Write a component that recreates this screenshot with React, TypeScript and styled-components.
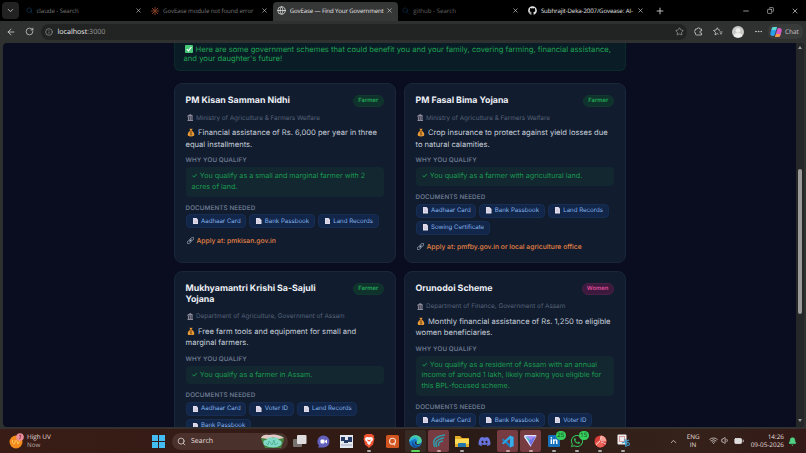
import React from 'react'
import styled, { createGlobalStyle, css } from 'styled-components'
import {
  ArrowLeft,
  BatteryFull,
  Bell,
  ChevronDown,
  ChevronUp,
  Copy,
  Ellipsis,
  Globe,
  Info,
  Minus,
  Plus,
  RotateCw,
  Search,
  Star,
  Volume1,
  Wifi,
  X,
} from 'lucide-react'
import { FaDiscord, FaGithub, FaLinkedinIn, FaWhatsapp } from 'react-icons/fa6'

const GlobalStyle = createGlobalStyle`
  * {
    box-sizing: border-box;
  }

  body {
    margin: 0;
    overflow: hidden;
    background: #000;
  }

  svg {
    display: block;
    flex-shrink: 0;
  }
`

const Screen = styled.div`
  display: flex;
  flex-direction: column;
  width: 806px;
  height: 453px;
  overflow: hidden;
  background: #2f3030;
  font-family: 'Open Sans', 'Noto Sans', sans-serif;
  text-rendering: geometricPrecision;
  white-space: nowrap;
`

/* browser chrome */

const TabStrip = styled.div`
  display: flex;
  align-items: center;
  height: 21px;
  padding-left: 2px;
  background: #000;
  color: #ddd;
`

const TabMenu = styled.div`
  display: grid;
  place-items: center;
  width: 17px;
  height: 17px;
  margin-right: 2.5px;
  border-radius: 4px;
  background: #222;
`

const Tab = styled.div<{ $active?: boolean; $color?: string }>`
  display: flex;
  align-items: center;
  width: 125.6px;
  height: 19px;
  margin-top: 2px;
  padding: 0 5px 2px 4px;
  border-radius: 4px 4px 0 0;
  font-size: 6.1px;
  color: ${p => p.$color || '#777'};
  ${p =>
    p.$active &&
    css`
      background: #353636;
    `}
`

const TabTitle = styled.span<{ $spacing?: number }>`
  flex: 1;
  width: 0;
  margin: 0 1px 0 4px;
  letter-spacing: ${p => p.$spacing || 0}px;
`

const NewTab = styled.div`
  margin-left: 6px;
`

const WindowButtons = styled.div`
  display: flex;
  gap: 17px;
  margin-left: auto;
  padding-right: 7px;
`

const Toolbar = styled.div`
  display: flex;
  align-items: center;
  height: 21.5px;
  padding: 0 3px 0 6px;
  background: #2f3030;
  color: #d0d0d0;
`

const Address = styled.div`
  display: flex;
  align-items: center;
  width: 646px;
  height: 16px;
  margin-left: 7px;
  padding: 0 3px 0 4px;
  border-radius: 8px;
  background: #222323;
  color: #9b9b9b;
  font-size: 7.1px;

  b {
    color: #eee;
    font-weight: 500;
  }

  span {
    flex: 1;
    margin-left: 4.5px;
  }
`

const ToolbarActions = styled.div`
  display: flex;
  align-items: center;
  justify-content: space-between;
  width: 69px;
  margin-left: 7px;
`

const ChatButton = styled.div`
  display: flex;
  align-items: center;
  gap: 3px;
  width: 35px;
  height: 15px;
  margin-left: auto;
  padding-left: 2px;
  border-radius: 6px;
  background: #393a3a;
  font-size: 6.4px;
`

/* page */

const Viewport = styled.main`
  display: flex;
  height: 384px;
  margin: 0 2px 0 3px;
  border-radius: 4px;
  overflow: hidden;
  background: #090d1f;
  font-family: Inter, sans-serif;
`

const Content = styled.div`
  flex: 1;
  padding-left: 170.5px;
  overflow: hidden;
`

const Scrollbar = styled.div`
  display: flex;
  flex-direction: column;
  align-items: center;
  width: 8px;
  padding-top: 3px;
  background: #252627;
`

const Arrow = styled.div<{ $down?: boolean }>`
  width: 0;
  border: 2px solid transparent;
  border-top-width: ${p => (p.$down ? 3 : 0)}px;
  border-bottom-width: ${p => (p.$down ? 0 : 3)}px;
  border-top-color: #999;
  border-bottom-color: #999;
`

const Thumb = styled.div`
  width: 4px;
  height: 145px;
  margin: 120px 0 105px;
  border-radius: 2px;
  background: #9a9a9a;
`

const Banner = styled.div`
  width: 452px;
  height: 28px;
  padding: 2px 9px;
  border: 1px solid #0b2b2b;
  border-top: 0;
  border-radius: 0 0 6px 6px;
  background: #0a1c25;
  color: #1fa354;
  font-size: 7.67px;
  line-height: 9.6px;
`

const Cards = styled.div`
  display: grid;
  grid-template-columns: 222px 222px;
  gap: 8.3px 8px;
  width: 452px;
  margin-top: 12px;
`

const Card = styled.article`
  height: 180px;
  padding: 11.2px 11px 0;
  border: 1px solid #1a2639;
  border-radius: 8px;
  background: #111c2e;
`

const CardHead = styled.div`
  display: flex;
  align-items: flex-start;
  justify-content: space-between;
`

const Title = styled.h2`
  margin: 0;
  color: #eceff5;
  font-size: 8.8px;
  font-weight: 700;
  line-height: 11px;
`

const Badge = styled.span<{ $pink?: boolean }>`
  padding: 0 4.3px;
  border: 1px solid ${p => (p.$pink ? '#482147' : '#11372f')};
  border-radius: 6px;
  background: ${p => (p.$pink ? '#3d1a3d' : '#10322c')};
  color: ${p => (p.$pink ? '#df4b99' : '#22a658')};
  font-size: 5.8px;
  font-weight: 600;
  line-height: 10px;
`

const Ministry = styled.div`
  display: flex;
  align-items: center;
  gap: 3px;
  height: 10px;
  margin-top: 6.3px;
  padding-left: 1px;
  color: #566379;
  font-size: 6.35px;
`

const Benefit = styled.p`
  margin: 4.5px 0 0;
  color: #c5cdd9;
  font-size: 7.6px;
  line-height: 11.4px;
`

const Label = styled.div`
  height: 8px;
  margin-top: 6px;
  color: #69778d;
  font-size: 6.3px;
  font-weight: 600;
  line-height: 8px;
  letter-spacing: 0.1px;
`

const Reason = styled.div`
  margin: 3px 0 7px;
  padding: 4px 6px;
  border-radius: 4px;
  background: #12272f;
  color: #1c9a51;
  font-size: 7.15px;
  line-height: 10.7px;

  & + ${Label} {
    margin-top: 0;
  }
`

const Chips = styled.div`
  display: flex;
  flex-wrap: wrap;
  gap: 3px 3px;
  margin-top: 2.5px;
`

const Chip = styled.span`
  display: flex;
  align-items: center;
  gap: 3px;
  height: 14px;
  padding: 0 4.6px 0 6px;
  border: 1px solid #172d51;
  border-radius: 4px;
  background: #12264a;
  color: #83b3ea;
  font-size: 6.12px;
`

const Apply = styled.div`
  display: flex;
  align-items: center;
  gap: 3px;
  height: 10px;
  margin-top: 7.3px;
  padding-left: 1px;
  color: #e48245;
  font-size: 6.75px;
  font-weight: 500;
`

const Inline = styled.span<{ $gap: number }>`
  display: inline-block;
  margin: 0 ${p => p.$gap}px 0 1px;
  line-height: 0;
  vertical-align: -1.5px;
`

/* taskbar */

const Taskbar = styled.footer`
  display: flex;
  align-items: center;
  height: 25px;
  margin-top: auto;
  border-top: 1px solid #38302f;
  background: linear-gradient(90deg, #391c16, #321b15 45%, #2b1b17 58%, #35221a 85%, #331917);
  color: #e6dfdd;
  font-size: 6.4px;
`

const Weather = styled.div`
  display: flex;
  align-items: center;
  gap: 3px;
  width: 152px;
  padding-left: 9px;
  line-height: 8.5px;

  small {
    display: block;
    color: #bcaca7;
    font-size: 6.2px;
  }
`

const SearchBox = styled.div`
  display: flex;
  align-items: center;
  gap: 5px;
  width: 115.5px;
  height: 17px;
  margin: 0 1px 0 7px;
  padding: 0 3px 0 5px;
  border-radius: 9px;
  background: #4b312c;
  font-size: 7px;

  span {
    flex: 1;
  }
`

const Apps = styled.div`
  display: flex;
`

const AppSlot = styled.div<{ $bg?: string; $running?: string }>`
  position: relative;
  display: grid;
  place-items: center;
  width: 21px;
  height: 22px;
  margin: 0 1.05px;
  border-radius: 2px;
  background: ${p => p.$bg || 'transparent'};

  &::after {
    content: '';
    position: absolute;
    bottom: 0.5px;
    width: ${p => (p.$running === '#5bd45c' ? 9 : 4)}px;
    height: 1.5px;
    border-radius: 1px;
    background: ${p => p.$running || 'transparent'};
  }
`

const Count = styled.span`
  position: absolute;
  top: 1px;
  right: -1px;
  padding: 0 1.5px;
  border-radius: 5px;
  background: #36cf5c;
  color: #10331a;
  font-size: 6px;
  line-height: 8.5px;
`

const Tray = styled.div`
  display: flex;
  align-items: center;
  margin-left: auto;
  padding-right: 9px;
`

const TwoLines = styled.div<{ $right?: boolean }>`
  text-align: ${p => (p.$right ? 'right' : 'center')};
  font-size: 6.4px;
  line-height: 8.5px;
`

const TrayIcons = styled.div`
  display: flex;
  gap: 3.5px;
  margin: 0 7px 0 9px;
`

const CheckIcon = () => (
  <svg width="8" height="8" viewBox="0 0 8 8">
    <rect width="8" height="8" rx="1" fill="#46c877" />
    <path d="M1.8 4.2l1.6 1.6 3-3.7" fill="none" stroke="#fff" strokeWidth="1.2" />
  </svg>
)

const BankIcon = () => (
  <svg width="6.5" height="7" viewBox="0 0 13 14">
    <path d="M6.5 0L13 4v1H0V4zM1 12h11v2H1z" fill="#8d8a99" />
    <path d="M3 5v7M6.5 5v7M10 5v7" stroke="#858292" strokeWidth="2.4" />
  </svg>
)

const MoneyIcon = () => (
  <svg width="8" height="8.5" viewBox="0 0 16 18">
    <path d="M5 1l3 1 3-1-1 5c4 3 5 6 5 8 0 3-2 4-7 4s-7-1-7-4c0-2 1-5 5-8z" fill="#e79a35" />
    <path d="M5.5 6h5" stroke="#7a4520" strokeWidth="1.5" />
    <path d="M10 9c-5-1-5 2-2 3s2 3-2 2M8 8v8" stroke="#764414" fill="none" strokeWidth="1.3" />
  </svg>
)

const PageIcon = () => (
  <svg width="5.5" height="6.5" viewBox="0 0 11 13">
    <path d="M0 0h7l4 4v9H0z" fill="#e1dded" />
    <path d="M2 4h4M2 6.5h7M2 9h7" stroke="#b5b4ca" strokeWidth=".8" />
  </svg>
)

const LinkIcon = () => (
  <svg width="7" height="7" viewBox="0 0 14 14" fill="none" stroke="#a7afbf" strokeWidth="1.8">
    <rect x="6" y="1.5" width="8" height="5" rx="2.5" transform="rotate(-45 10 4)" />
    <rect x="0" y="7.5" width="8" height="5" rx="2.5" transform="rotate(-45 4 10)" />
    <path d="M5 9l4-4" />
  </svg>
)

const ExtensionsIcon = () => (
  <svg width="9" height="9" viewBox="0 0 18 18" fill="none" stroke="#ccc" strokeWidth="1.6">
    <path d="M3 4h3.500a2.500 2.500 0 015 0H15v4h-1.500a2 2 0 000 4H15v4H5q-2 0-2-2v-2.500a2.500 2.500 0 010-5z" />
  </svg>
)

const CopilotIcon = () => (
  <svg width="12" height="12" viewBox="0 0 24 24">
    <path d="M7 2h7l-4 14c-1 3-2 4-4 4-5 0-6-3-5-7l2-7c1-3 2-4 4-4z" fill="#2b9fe8" />
    <path d="M7 2h7l-2 6H3c1-4 2-6 4-6z" fill="#5ed7cf" />
    <path d="M17 22h-7l4-14c1-3 2-4 4-4 5 0 6 3 5 7l-2 7c-1 3-2 4-4 4z" fill="#d75bc5" />
    <path d="M17 22h-7l2-6h9c-1 4-2 6-4 6z" fill="#f09a45" />
  </svg>
)

const FavouritesIcon = () => (
  <svg width="10" height="9" viewBox="0 0 20 18" fill="none" stroke="#ccc" strokeWidth="1.6">
    <path d="M11 14.500L8.500 13 4 16l1-5.500L1 7l5-1 2.500-4.500L11 6l3 .5M13 10h6M14 13.500h4" />
  </svg>
)

const WeatherIcon = () => (
  <svg width="15" height="16" viewBox="0 0 15 16">
    <circle cx="7" cy="9" r="6.5" fill="#f28a1d" />
    <path d="M3.5 7v3q1.3 2 2.6 0V7M7.5 7l1.5 4 2-4" fill="none" stroke="#ffc05a" />
    <circle cx="11" cy="4" r="3.8" fill="#ed8e9b" />
    <path d="M10 2.3h2L11 4q2 1-1 2" fill="none" stroke="#792e43" strokeWidth=".7" />
  </svg>
)

const WindowsIcon = () => (
  <svg width="13" height="13" viewBox="0 0 13 13" fill="#43bdf1">
    <path d="M0 0h6v6H0zM7 0h6v6H7zM0 7h6v6H0zM7 7h6v6H7z" />
  </svg>
)

const LotusIcon = () => (
  <svg width="25" height="14" viewBox="0 0 25 14">
    <path d="M1 5Q2 0 8 1h9q7 0 7 5l-3 8H5z" fill="#46833e" />
    <path d="M1 4q2-4 8-3 8-2 15 3l-5 1q-6-3-11 0z" fill="#e5c8ca" />
    <path d="M4 11q-2-5 2-5 3-4 7-2 4-2 6 2 4 1 2 5-7 5-17 0z" fill="#82d9c5" />
    <path d="M6 9l2 2 1-4 3 4 2-5 1 5 3-2" fill="none" stroke="#3fa888" strokeWidth=".7" />
  </svg>
)

const TaskViewIcon = () => (
  <svg width="14" height="12" viewBox="0 0 14 12">
    <rect y="4" width="9" height="8" rx="1" fill="#777170" />
    <rect x="4" width="9.5" height="9" rx="1" fill="#dfdddd" />
  </svg>
)

const MeetIcon = () => (
  <svg width="13" height="13" viewBox="0 0 13 13">
    <path d="M6.5.5a6 6 0 110 12H1l1-2A6 6 0 016.5.5z" fill="#6260bc" />
    <rect x="3.5" y="4.5" width="4" height="4" rx="1" fill="#fff" />
    <path d="M8 6l2-1.5v4L8 7z" fill="#fff" />
  </svg>
)

const SketchIcon = () => (
  <svg width="13" height="13" viewBox="0 0 13 13">
    <rect width="13" height="13" fill="#e4e8f0" />
    <path d="M1 2h4v3h3V2h4v5H8v1H4V6H1z" fill="#263a66" />
    <path d="M1 10h11" stroke="#8591ae" strokeWidth=".7" />
  </svg>
)

const BraveIcon = () => (
  <svg width="12" height="14" viewBox="0 0 12 14">
    <path d="M3 0h6l1 1.2 1.3.2-.5 2 .7 1.2-1.5 6L6 14l-4-3.4-1.5-6 .7-1.2-.5-2L2 1.2z" fill="#f15430" />
    <path d="M2.5 3.5L5 3l1 .5L7 3l2.5.5L10 6 7.5 8.500l.3 1L6 11 4.200 9.500l.3-1L2 6z" fill="#fff" />
    <path d="M3.5 5.5L6 6l2.5-.5L6.500 7.500h-1z" fill="#f15430" />
  </svg>
)

const QuizIcon = () => (
  <svg width="13" height="13" viewBox="0 0 13 13">
    <rect width="13" height="13" rx="1.5" fill="#d2541f" />
    <circle cx="6.5" cy="6.2" r="3" fill="none" stroke="#f8ded2" strokeWidth="1.1" />
    <path d="M7 8l2 2.5" stroke="#f8ded2" strokeWidth="1.1" />
  </svg>
)

const EdgeIcon = () => (
  <svg width="13" height="13" viewBox="0 0 26 26">
    <circle cx="13" cy="13" r="12.5" fill="#1879c8" />
    <path d="M.5 13C1 5 6 .5 13 .5S26 6 25.5 12c0 4-4 6-8 6-3 0-3-1-2-3 2-4-1-7-5-7S2 10 .5 13z" fill="#4ed09a" />
    <path d="M.5 13C2 7 6 4 12 4c6 0 8 5 6 8-2-4-6-5-10-3S3 13 .5 13z" fill="#2db4dc" />
    <path d="M9 13c-2 6 4 11 13 8-6 6-16 4-16-3 0-3 1-4 3-5z" fill="#124c9b" />
    <path d="M15 15c-2 3 3 5 9 2-3 4-12 4-12-1 0-3 3-4 3-1z" fill="#2e2320" />
  </svg>
)

const WingIcon = () => (
  <svg width="14" height="14" viewBox="0 0 14 14" fill="none" stroke="#2f9cab" strokeWidth="1.5">
    <path d="M3 13Q-2 3 13 1M5 13Q1 6 12 4M7 12Q5 8 11 7" />
  </svg>
)

const FolderIcon = () => (
  <svg width="14" height="12" viewBox="0 0 14 12">
    <path d="M0 1h5l2 2h7v9H0z" fill="#e5ad27" />
    <path d="M0 4h14v5H0z" fill="#ffdb57" />
    <path d="M3 9q0-1 1-1h6q1 0 1 1v3H3z" fill="#2376ad" />
  </svg>
)

const CodeIcon = () => (
  <svg width="13" height="13" viewBox="0 0 26 26">
    <path d="M18 1l7 3v18l-7 3L2 10l2-3 14 11z" fill="#1685ca" />
    <path d="M18 1L2 16l2 3L18 8z" fill="#2ba6e6" />
    <path d="M18 1l7 3v18l-7 3z" fill="#39aeea" />
  </svg>
)

const ProtonIcon = () => (
  <svg width="13" height="12" viewBox="0 0 13 12">
    <path d="M1 0h11q1 1 0 2L7 11q-.5 1-1 0L0 2Q0 0 1 0z" fill="#e9e2ff" />
    <path d="M5 4l7-3-5 10-2-4z" fill="#6d70e6" />
    <path d="M2 1l9 .3L7 5z" fill="#a78bf5" />
    <path d="M1 1l5 3-1 3z" fill="#48b9c7" />
  </svg>
)

const PinwheelIcon = () => (
  <svg width="13" height="13" viewBox="0 0 13 13">
    <circle cx="6.5" cy="6.5" r="6" fill="#d53c3a" />
    <path d="M7 .5a6 6 0 015.5 6H7z" fill="#f6a195" />
    <path d="M1 8q4-4 6-1l3 4q-6 4-9-3z" fill="#ef6459" />
    <path d="M7 1l-1 5-4 4M7 7l5 2" fill="none" stroke="#ffe8df" strokeWidth=".8" />
  </svg>
)

const SnipIcon = () => (
  <svg width="13" height="14" viewBox="0 0 13 14">
    <rect x=".5" y=".5" width="9" height="10" rx="1" fill="#eee" />
    <rect x="2.5" y="2.5" width="5" height="5" fill="none" stroke="#c14a40" strokeDasharray="1" />
    <path d="M5 9l7-3M8 5l1 8" stroke="#3f9ed0" strokeWidth="1.3" />
    <circle cx="11" cy="10" r="1.5" fill="none" stroke="#3f9ed0" />
  </svg>
)

type Scheme = {
  title: string[]
  tag: string
  ministry: string
  benefit: string[]
  reason: string[]
  docs: string[]
  apply?: string
}

const schemes: Scheme[] = [
  {
    title: ['PM Kisan Samman Nidhi'],
    tag: 'Farmer',
    ministry: 'Ministry of Agriculture & Farmers Welfare',
    benefit: ['Financial assistance of Rs. 6,000 per year in three', 'equal installments.'],
    reason: ['You qualify as a small and marginal farmer with 2', 'acres of land.'],
    docs: ['Aadhaar Card', 'Bank Passbook', 'Land Records'],
    apply: 'pmkisan.gov.in',
  },
  {
    title: ['PM Fasal Bima Yojana'],
    tag: 'Farmer',
    ministry: 'Ministry of Agriculture & Farmers Welfare',
    benefit: ['Crop insurance to protect against yield losses due', 'to natural calamities.'],
    reason: ['You qualify as a farmer with agricultural land.'],
    docs: ['Aadhaar Card', 'Bank Passbook', 'Land Records', 'Sowing Certificate'],
    apply: 'pmfby.gov.in or local agriculture office',
  },
  {
    title: ['Mukhyamantri Krishi Sa-Sajuli', 'Yojana'],
    tag: 'Farmer',
    ministry: 'Department of Agriculture, Government of Assam',
    benefit: ['Free farm tools and equipment for small and', 'marginal farmers.'],
    reason: ['You qualify as a farmer in Assam.'],
    docs: ['Aadhaar Card', 'Voter ID', 'Land Records', 'Bank Passbook'],
  },
  {
    title: ['Orunodoi Scheme'],
    tag: 'Women',
    ministry: 'Department of Finance, Government of Assam',
    benefit: ['Monthly financial assistance of Rs. 1,250 to eligible', 'women beneficiaries.'],
    reason: [
      'You qualify as a resident of Assam with an annual',
      'income of around 1 lakh, likely making you eligible for',
      'this BPL-focused scheme.',
    ],
    docs: ['Aadhaar Card', 'Bank Passbook', 'Voter ID'],
  },
]

const Lines = ({ lines }: { lines: string[] }) => (
  <>
    {lines.map((line, i) => (
      <React.Fragment key={line}>
        {i > 0 && <br />}
        {line}
      </React.Fragment>
    ))}
  </>
)

const SchemeCard = ({ scheme }: { scheme: Scheme }) => (
  <Card>
    <CardHead>
      <Title>
        <Lines lines={scheme.title} />
      </Title>
      <Badge $pink={scheme.tag === 'Women'}>{scheme.tag}</Badge>
    </CardHead>
    <Ministry>
      <BankIcon />
      {scheme.ministry}
    </Ministry>
    <Benefit>
      <Inline $gap={3.5}>
        <MoneyIcon />
      </Inline>
      <Lines lines={scheme.benefit} />
    </Benefit>
    <Label>WHY YOU QUALIFY</Label>
    <Reason>
      ✓ <Lines lines={scheme.reason} />
    </Reason>
    <Label>DOCUMENTS NEEDED</Label>
    <Chips>
      {scheme.docs.map(doc => (
        <Chip key={doc}>
          <PageIcon />
          {doc}
        </Chip>
      ))}
    </Chips>
    {scheme.apply && (
      <Apply>
        <LinkIcon />
        Apply at: {scheme.apply}
      </Apply>
    )}
  </Card>
)

const App = () => (
  <Screen>
    <GlobalStyle />
    <TabStrip>
      <TabMenu>
        <ChevronDown size={9} />
      </TabMenu>
      <Tab>
        <Search size={7} color="#174267" />
        <TabTitle $spacing={-0.07}>claude - Search</TabTitle>
        <X size={7} color="#ddd" />
      </Tab>
      <Tab>
        <svg width="8" height="8" viewBox="0 0 8 8" stroke="#813c28" strokeWidth="1">
          <path d="M4 0v8M0 4h8M1 1l6 6M7 1L1 7" />
        </svg>
        <TabTitle $spacing={-0.1}>GovEase module not found error</TabTitle>
        <X size={7} color="#ddd" />
      </Tab>
      <Tab $active $color="#e5e5e5">
        <Globe size={9} />
        <TabTitle $spacing={-0.13}>GovEase — Find Your Government</TabTitle>
        <X size={7} />
      </Tab>
      <Tab $color="#626262">
        <Search size={7} color="#0c3051" />
        <TabTitle>github - Search</TabTitle>
        <X size={7} color="#ddd" />
      </Tab>
      <Tab $color="#e5e5e5">
        <FaGithub size={9} />
        <TabTitle $spacing={-0.1}>Subhrajit-Deka-2007/Govease: AI-</TabTitle>
        <X size={7} />
      </Tab>
      <NewTab>
        <Plus size={10} />
      </NewTab>
      <WindowButtons>
        <Minus size={8} />
        <Copy size={7} transform="scale(-1 1)" />
        <X size={8} />
      </WindowButtons>
    </TabStrip>
    <Toolbar>
      <ArrowLeft size={10} />
      <svg width="9" />
      <RotateCw size={9} />
      <Address>
        <Info size={8} />
        <span>
          <b>localhost</b>:3000
        </span>
        <Star size={9} />
      </Address>
      <ToolbarActions>
        <ExtensionsIcon />
        <FavouritesIcon />
        <svg width="12" height="12" viewBox="0 0 12 12">
          <circle cx="6" cy="6" r="6" fill="#c9c9c7" />
          <circle cx="6" cy="4.5" r="2.3" fill="#efefed" />
          <path d="M2 10q0-3 4-3t4 3q-4 3-8 0z" fill="#efefed" />
        </svg>
        <Ellipsis size={9} />
      </ToolbarActions>
      <ChatButton>
        <CopilotIcon />
        Chat
      </ChatButton>
    </Toolbar>
    <Viewport>
      <Content>
        <Banner>
          <Inline $gap={3}>
            <CheckIcon />
          </Inline>
          <Lines
            lines={[
              'Here are some government schemes that could benefit you and your family, covering farming, financial assistance,',
              "and your daughter's future!",
            ]}
          />
        </Banner>
        <Cards>
          {schemes.map(scheme => (
            <SchemeCard key={scheme.title[0]} scheme={scheme} />
          ))}
        </Cards>
      </Content>
      <Scrollbar>
        <Arrow />
        <Thumb />
        <Arrow $down />
      </Scrollbar>
    </Viewport>
    <Taskbar>
      <Weather>
        <WeatherIcon />
        <div>
          High UV
          <small>Now</small>
        </div>
      </Weather>
      <WindowsIcon />
      <SearchBox>
        <Search size={9} />
        <span>Search</span>
        <LotusIcon />
      </SearchBox>
      <Apps>
        <AppSlot>
          <TaskViewIcon />
        </AppSlot>
        <AppSlot>
          <MeetIcon />
        </AppSlot>
        <AppSlot>
          <SketchIcon />
        </AppSlot>
        <AppSlot $running="#aaa">
          <BraveIcon />
        </AppSlot>
        <AppSlot>
          <QuizIcon />
        </AppSlot>
        <AppSlot $bg="#372a25" $running="#5bd45c">
          <EdgeIcon />
        </AppSlot>
        <AppSlot $bg="#773c42" $running="#c5a2a2">
          <WingIcon />
        </AppSlot>
        <AppSlot $running="#aaa">
          <FolderIcon />
        </AppSlot>
        <AppSlot>
          <FaDiscord size={13} color="#6975df" />
        </AppSlot>
        <AppSlot $bg="#773c42" $running="#c5a2a2">
          <CodeIcon />
        </AppSlot>
        <AppSlot $bg="#773c42" $running="#c5a2a2">
          <ProtonIcon />
        </AppSlot>
        <AppSlot $running="#aaa">
          <svg width="12" height="12" viewBox="0 0 12 12">
            <rect width="12" height="12" rx="1" fill="#1672bd" />
            <FaLinkedinIn x="2" y="2" size={8} color="#fff" />
          </svg>
          <Count>25</Count>
        </AppSlot>
        <AppSlot $running="#aaa">
          <FaWhatsapp size={14} color="#35bd5a" />
          <Count>15</Count>
        </AppSlot>
        <AppSlot $running="#aaa">
          <PinwheelIcon />
        </AppSlot>
        <AppSlot $running="#aaa">
          <SnipIcon />
        </AppSlot>
      </Apps>
      <Tray>
        <ChevronUp size={9} />
        <svg width="9" />
        <TwoLines>
          ENG
          <br />
          IN
        </TwoLines>
        <TrayIcons>
          <Wifi size={9} />
          <Volume1 size={9} />
          <BatteryFull size={10} fill="#ddd" />
        </TrayIcons>
        <TwoLines $right>
          14:26
          <br />
          09-05-2026
        </TwoLines>
        <svg width="4" />
        <Bell size={9} color="#4fd283" fill="#4fd283" />
      </Tray>
    </Taskbar>
  </Screen>
)

export default App
